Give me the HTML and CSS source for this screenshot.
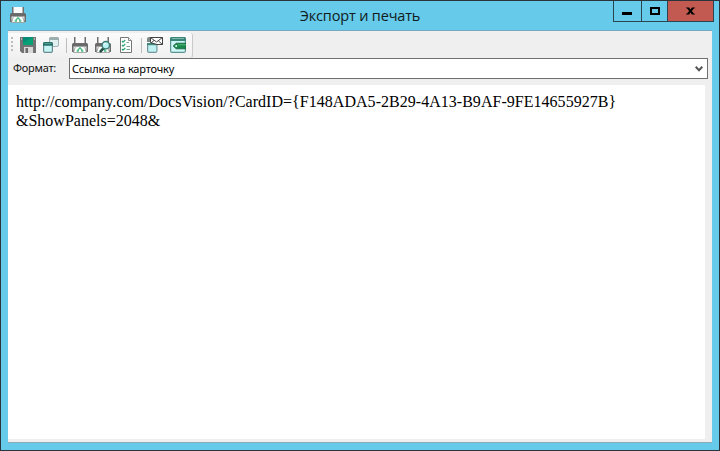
FILE: index.html
```html
<!DOCTYPE html>
<html lang="ru">
<head>
<meta charset="utf-8">
<title>Экспорт и печать</title>
<link rel="stylesheet" href="styles.css">
</head>
<body>
<svg class="defs" width="0" height="0">
  <symbol id="printer" viewBox="0 0 16 16">
    <path d="M2 0h12v8H2z" fill="#6e6e6e"/>
    <path d="M3.5 0h9v6h-9z" fill="#fafafa"/>
    <path d="M0 7.5Q0 6 1.5 6H3v1h10V6h1.5Q16 6 16 7.5V15H0z" fill="#6a6a6a"/>
    <path d="M1.5 9.5h13v4h-13z" fill="#f0f0f0"/>
    <path d="M1.5 15.5 3.5 9.5h9l2 6z" fill="#fafffc" stroke="#959595" stroke-width=".8"/>
    <path d="M5.7 13.2 8 10.8l2.3 2.4M4.6 14h2.4M9 14h2.4" fill="none" stroke="#4dbb86" stroke-width="1.3"/>
  </symbol>
</svg>
<div class="window">
  <header class="titlebar">
    <svg class="icon app-icon"><use href="#printer"/></svg>
    <h1 class="title">Экспорт и печать</h1>
    <div class="controls">
      <span class="control minimize"><i></i></span>
      <span class="control maximize"><i></i></span>
      <span class="control close"><svg width="9" height="8" viewBox="0 0 10 8"><path d="M0 0h3.5L5 2.4 6.5 0H10v1H9L6.5 4 9 7h1v1H6.5L5 5.6 3.5 8H0V7h1l2.5-3L1 1H0z"/></svg></span>
    </div>
  </header>
  <main class="client">
    <div class="toolbar">
      <span class="grip"><i></i><i></i><i></i><i></i></span>
      <svg class="icon" viewBox="0 0 16 16">
        <path d="M0 0h16v16H2l-2-2z" fill="#737373"/>
        <path d="M3 0h10v8H3z" fill="#08a176"/><path d="M3 0h10L3 6z" fill="#078c79"/>
        <path d="M1 1h1v2H1zM14 1h1v2h-1z" fill="#b5b5b5"/>
        <path d="M4 10h9v6H4z" fill="#d8d8d8"/><path d="M5.5 11h2.5v5H5.5z" fill="#6b6b6b"/>
      </svg>
      <svg class="icon copy" viewBox="0 0 16 16">
        <rect x="6.5" y=".5" width="9" height="9" rx="1.5" fill="#e2f0f1" stroke="#a2b2b3"/>
        <path d="M6 2q0-2 2-2h6q2 0 2 2v1H6z" fill="#9caead"/>
        <rect x=".6" y="5.6" width="8.8" height="9.8" rx="1.3" fill="#c6f4f5" stroke="#668b8d" stroke-width="1.2"/>
        <path d="M0 7q0-2 2-2h6q2 0 2 2v1.7H0z" fill="#28716a"/><path d="M1.5 6.6h7" stroke="#55a392"/>
      </svg>
      <span class="separator"></span>
      <svg class="icon"><use href="#printer"/></svg>
      <svg class="icon preview" viewBox="0 0 16 16">
        <use href="#printer" width="16" height="16"/>
        <path d="m8.6 11.4-3 3" stroke="#2a4b48" stroke-width="2.4" stroke-linecap="round"/>
        <circle cx="10.8" cy="8.2" r="3.7" fill="#b8f2f4" stroke="#397a75" stroke-width="1.3"/>
        <path d="M8.8 8.2q.2-1.9 2.2-1.9" fill="none" stroke="#fff"/>
      </svg>
      <svg class="icon checklist" viewBox="0 0 16 16">
        <path d="M2.5.5h8l3 3v12h-11z" fill="#fff" stroke="#777"/>
        <path d="M10.5.5v3h3" fill="#eee" stroke="#888"/>
        <path d="m4 4 1 1.2L7.3 3M4 8l1 1.2L7.3 7M4 12l1 1.2L7.3 11" fill="none" stroke="#28a574" stroke-width="1.2"/>
        <path d="M8.5 5.5H11M8.5 9.5H12M8.5 12.5H12" stroke="#73a991"/>
      </svg>
      <span class="separator"></span>
      <svg class="icon" viewBox="0 0 16 16">
        <path d="M0 5V2q0-2 2-2h4v5z" fill="#7e8a88"/>
        <rect x=".6" y="6.6" width="9.3" height="8.8" rx="1.5" fill="#bff1f3" stroke="#729699" stroke-width="1.2"/>
        <path d="M0 6h10.5v2.2H0z" fill="#45867c"/>
        <path d="M3.5.5h12v7H10L3.5 5.5z" fill="#fff" stroke="#444"/>
        <path d="m3.5.5 6 4.5 6-4.5M15.5 7.5l-4-3.5M4 6l3-2.5" fill="none" stroke="#444" stroke-width="1"/>
      </svg>
      <svg class="icon tag" viewBox="0 0 16 16">
        <rect x=".6" y=".6" width="14.8" height="14.8" rx="1.5" fill="#cdf7f7" stroke="#5c9290" stroke-width="1.2"/>
        <path d="M0 2q0-2 2-2h12q2 0 2 2v2H0z" fill="#398577"/><path d="M2 1.5h12" stroke="#81b9a9"/>
        <path d="m3.2 9 3-2.8H16v5.6H6.2z" fill="#18884d" stroke="#135d3d" stroke-width=".8"/>
        <path d="M8 7.8h8" stroke="#53bb73"/><circle cx="6.2" cy="9" r="1" fill="#e6fff0"/>
      </svg>
    </div>
    <div class="format-row">
      <span class="label">Формат:</span>
      <div class="combo"><span>Ссылка на карточку</span>
        <svg width="8" height="6" viewBox="0 0 8 6"><path d="m.7.8 3.3 3.4L7.3.8" fill="none" stroke="#555" stroke-width="2"/></svg>
      </div>
    </div>
    <div class="document"><span class="url">http://company.com/DocsVision/?CardID={F148ADA5-2B29-4A13-B9AF-9FE14655927B}</span><br>&amp;ShowPanels=2048&amp;</div>
  </main>
</div>
</body>
</html>
```

FILE: styles.css
```css
* { box-sizing: border-box; }
body { margin: 0; overflow: hidden; }
.defs { position: absolute; }
.window {
  width: 720px;
  height: 451px;
  padding: 0 7px 7px;
  border: 1px solid #2c343b;
  background: #66caea;
  display: flex;
  flex-direction: column;
}
.titlebar {
  height: 29px;
  flex: none;
  display: grid;
  grid-template-columns: 1fr auto 1fr;
  margin-right: -2px;
}
.icon { width: 16px; height: 16px; flex: none; display: block; }
.app-icon { margin: 6px 0 0 2px; }
.title {
  margin: 4px 2px 0 0;
  font: 400 14.5px/22px "Open Sans", "Noto Sans", sans-serif;
  letter-spacing: -0.17px;
  color: #101b20;
  white-space: nowrap;
}
.controls {
  justify-self: end;
  display: flex;
  width: 101px;
  height: 21px;
  border: 1px solid #2a4550;
  border-top: 0;
}
.control { display: flex; align-items: center; justify-content: center; }
.control + .control { border-left: 1px solid #2a4550; }
.minimize { width: 27px; }
.maximize { width: 26px; }
.close { flex: 1; background: #c35a52; }
.minimize i { width: 10px; height: 3px; background: #000; margin: 5px 2px 0 0; }
.maximize i { width: 10px; height: 8px; border: 2px solid #000; }
.client {
  flex: 1;
  display: flex;
  flex-direction: column;
  background: #efefef;
  border-top: 1px solid #75a9bf;
  border-bottom: 1px solid #8cabb9;
}
.toolbar {
  width: 185px;
  height: 25px;
  margin-top: 2px;
  padding: 4px 0 0 3px;
  display: flex;
  background: linear-gradient(#fbfbfb, #f0f0f0);
  border-right: 1px solid #c9c9c9;
  border-radius: 0 3px 3px 0;
}
.grip { width: 9px; display: flex; flex-direction: column; gap: 2px; }
.grip i { width: 2px; height: 2px; background: #bdbdbd; }
.copy, .preview, .checklist, .tag { margin-left: 7px; }
.separator { width: 1px; height: 15px; margin: 1px 5px 0 7px; background: #bdbdbd; }
.format-row { height: 27px; display: flex; padding: 0 4px 0 5px; }
.label {
  width: 56px;
  font: 11px/20px "Noto Sans", sans-serif;
  letter-spacing: -0.25px;
  color: #111;
}
.combo {
  flex: 1;
  height: 21px;
  padding: 0 4px 0 2px;
  display: flex;
  align-items: center;
  justify-content: space-between;
  background: #fff;
  border: 1px solid #707070;
  font: 11px/19px "Noto Sans", sans-serif;
  letter-spacing: -0.17px;
  color: #000;
}
.document {
  flex: 1;
  margin: 0 7px 3px 0;
  padding: 7px 8px 0;
  background: #fff;
  font: 16px/19px "Liberation Serif", serif;
  color: #000;
  white-space: nowrap;
}
.url { letter-spacing: 0.03px; }
```
